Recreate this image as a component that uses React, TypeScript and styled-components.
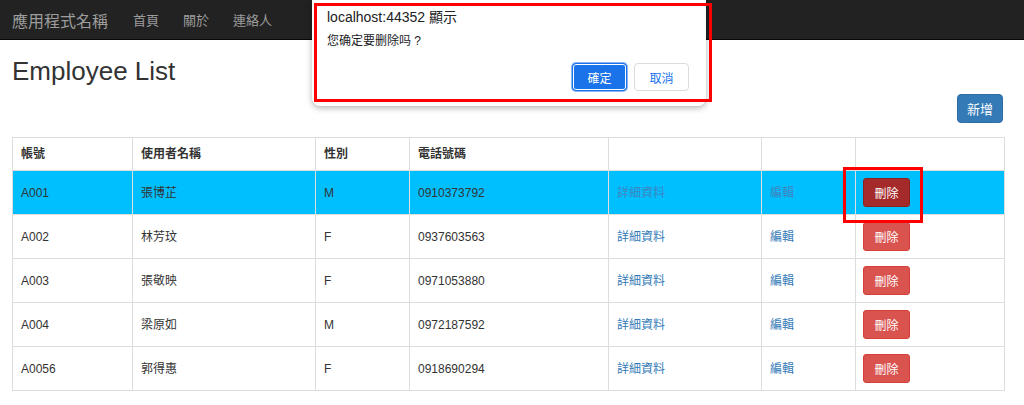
import styled, { createGlobalStyle } from "styled-components";

type Employee = {
	id: string;
	name: string;
	gender: string;
	phone: string;
};

const employees: Employee[] = [
	{ id: "A001", name: "張博芷", gender: "M", phone: "0910373792" },
	{ id: "A002", name: "林芳玟", gender: "F", phone: "0937603563" },
	{ id: "A003", name: "張敬映", gender: "F", phone: "0971053880" },
	{ id: "A004", name: "梁原如", gender: "M", phone: "0972187592" },
	{ id: "A0056", name: "郭得惠", gender: "F", phone: "0918690294" },
];

const colWidths = [120, 183, 94, 199, 153, 94, 149];

const GlobalStyle = createGlobalStyle`
	html, body {
		margin: 0;
		padding: 0;
		background: #fff;
	}
	body {
		font-family: "Liberation Sans", Arial, "Noto Sans CJK TC", sans-serif;
		font-size: 12px;
		color: #333;
	}
	* {
		box-sizing: border-box;
	}
`;

function App() {
	return (
		<>
			<GlobalStyle />
			<Page>
				<Navbar>
					<Brand>應用程式名稱</Brand>
					<NavLink>首頁</NavLink>
					<NavLink>關於</NavLink>
					<NavLink>連絡人</NavLink>
				</Navbar>
				<Content>
					<Title>Employee List</Title>
					<Toolbar>
						<PrimaryButton>新增</PrimaryButton>
					</Toolbar>
					<Table>
						<colgroup>
							{colWidths.map((w, i) => (
								<col key={i} style={{ width: w }} />
							))}
						</colgroup>
						<thead>
							<tr>
								<Th>帳號</Th>
								<Th>使用者名稱</Th>
								<Th>性別</Th>
								<Th>電話號碼</Th>
								<Th></Th>
								<Th></Th>
								<Th></Th>
							</tr>
						</thead>
						<tbody>
							{employees.map((e, index) => (
								<Row key={e.id} $active={index === 0}>
									<Td>{e.id}</Td>
									<Td>{e.name}</Td>
									<Td>{e.gender}</Td>
									<Td>{e.phone}</Td>
									<Td>
										<Link $active={index === 0}>詳細資料</Link>
									</Td>
									<Td>
										<Link $active={index === 0}>編輯</Link>
									</Td>
									<Td>
										<DangerButton $active={index === 0}>刪除</DangerButton>
									</Td>
								</Row>
							))}
						</tbody>
					</Table>
				</Content>

				<Dialog>
					<DialogTitle>localhost:44352 顯示</DialogTitle>
					<DialogMessage>您确定要删除吗 ?</DialogMessage>
					<DialogActions>
						<DialogButton $primary>確定</DialogButton>
						<DialogButton>取消</DialogButton>
					</DialogActions>
				</Dialog>

				<Highlight $left={314} $top={3} $width={398} $height={99} />
				<Highlight $left={843} $top={167} $width={80} $height={56} />
			</Page>
		</>
	);
}

const Page = styled.div`
	position: relative;
	width: 1024px;
	height: 405px;
	overflow: hidden;
`;

const Navbar = styled.nav`
	display: flex;
	align-items: center;
	height: 40px;
	padding: 0 12px;
	background: #222;
	border-bottom: 1px solid #080808;
	font-family: "Liberation Sans", "Noto Sans CJK TC", sans-serif;
`;

const Brand = styled.span`
	font-size: 16px;
	color: #9d9d9d;
	margin-right: 25px;
`;

const NavLink = styled.span`
	font-size: 13px;
	color: #9d9d9d;
	margin-right: 24px;
`;

const Content = styled.main`
	padding: 0 20px 0 12px;
`;

const Title = styled.h2`
	margin: 0;
	padding-top: 15px;
	height: 52px;
	font-size: 26px;
	font-weight: 400;
	line-height: 32px;
	color: #333;
`;

const Toolbar = styled.div`
	display: flex;
	justify-content: flex-end;
	padding-right: 1px;
	height: 45px;
	padding-top: 2px;
`;

const PrimaryButton = styled.button`
	width: 46px;
	height: 29px;
	border: 1px solid #2e6da4;
	border-radius: 4px;
	background: #337ab7;
	color: #fff;
	font-family: "Liberation Sans", "Noto Sans CJK TC", sans-serif;
	font-size: 13px;
	padding: 0;
`;

const Table = styled.table`
	width: 992px;
	table-layout: fixed;
	border-collapse: collapse;
	border: 1px solid #ddd;
`;

const Th = styled.th`
	height: 33px;
	padding: 0 8px;
	border: 1px solid #ddd;
	text-align: left;
	font-weight: 600;
	font-size: 12px;
	line-height: 16px;
	vertical-align: middle;
`;

const Row = styled.tr<{ $active?: boolean }>`
	height: 44px;
	background: ${(p) => (p.$active ? "#00bfff" : "#fff")};
`;

const Td = styled.td`
	padding: 0 8px;
	border: 1px solid #ddd;
	vertical-align: middle;
	font-size: 12px;
	line-height: 16px;
	white-space: nowrap;
`;

const Link = styled.a<{ $active?: boolean }>`
	color: ${(p) => (p.$active ? "#3f85bf" : "#337ab7")};
	text-decoration: none;
	cursor: pointer;
`;

const DangerButton = styled.button<{ $active?: boolean }>`
	display: block;
	width: 47px;
	height: 29px;
	margin-left: -1px;
	padding: 0;
	border: 1px solid ${(p) => (p.$active ? "#8b2222" : "#d43f3a")};
	border-radius: 3px;
	background: ${(p) => (p.$active ? "#a52a2a" : "#d9534f")};
	color: #fff;
	font-family: "Liberation Sans", "Noto Sans CJK TC", sans-serif;
	font-size: 12px;
`;

const Dialog = styled.div`
	position: absolute;
	left: 312px;
	top: 0;
	width: 394px;
	height: 106px;
	background: #fff;
	border-radius: 0 0 8px 8px;
	box-shadow: 0 2px 6px rgba(0, 0, 0, 0.3);
	padding: 8px 15px 0 15px;
	display: flex;
	flex-direction: column;
	font-family: "Liberation Sans", "Noto Sans CJK SC", sans-serif;
`;

const DialogTitle = styled.div`
	font-size: 14px;
	color: #202124;
	line-height: 18px;
`;

const DialogMessage = styled.div`
	margin-top: 7px;
	font-size: 12px;
	color: #202124;
	line-height: 16px;
`;

const DialogActions = styled.div`
	display: flex;
	justify-content: flex-end;
	gap: 7px;
	margin-top: 14px;
	padding-right: 2px;
`;

const DialogButton = styled.button<{ $primary?: boolean }>`
	width: 55px;
	height: 28px;
	padding: 0;
	border-radius: 4px;
	font-family: "Liberation Sans", "Noto Sans CJK TC", sans-serif;
	font-size: 12px;
	border: 1px solid ${(p) => (p.$primary ? "#1a73e8" : "#dadce0")};
	background: ${(p) => (p.$primary ? "#1a73e8" : "#fff")};
	color: ${(p) => (p.$primary ? "#fff" : "#1a73e8")};
	box-shadow: ${(p) => (p.$primary ? "0 0 0 1px #fff inset, 0 0 0 1px #8ab4f8" : "none")};
`;

const Highlight = styled.div<{ $left: number; $top: number; $width: number; $height: number }>`
	position: absolute;
	left: ${(p) => p.$left}px;
	top: ${(p) => p.$top}px;
	width: ${(p) => p.$width}px;
	height: ${(p) => p.$height}px;
	border: 3px solid #f00;
	pointer-events: none;
`;

export default App;
